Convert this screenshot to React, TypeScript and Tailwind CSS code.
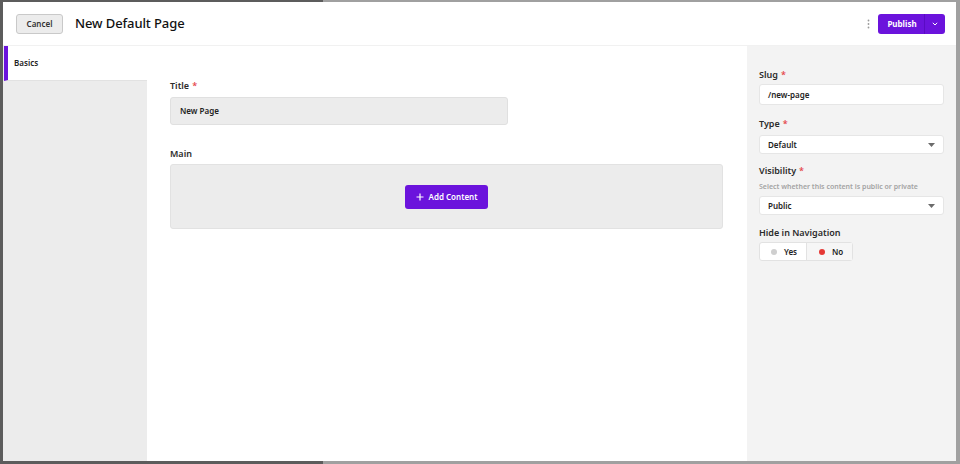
import React from "react";

const font = { fontFamily: '"Noto Sans", "Open Sans", sans-serif' };

function Label({ text, required }: { text: string; required?: boolean }) {
  return (
    <div className="text-[9px] font-semibold text-[#2b2b2b] leading-none">
      {text}
      {required ? <span className="text-[#e5484d] ml-[3px]">*</span> : null}
    </div>
  );
}

function Caret() {
  return (
    <svg width="7" height="4" viewBox="0 0 7 4">
      <path d="M0 0h7L3.5 4z" fill="#6b6b6b" />
    </svg>
  );
}

function Select({ value }: { value: string }) {
  return (
    <div className="h-[19px] bg-white border border-[#e6e6e6] rounded-[3px] flex items-center justify-between pl-[8px] pr-[8px]">
      <span className="text-[8px] font-semibold text-[#222]">{value}</span>
      <Caret />
    </div>
  );
}

export default function App() {
  return (
    <div
      className="h-[464px] w-[960px] pt-[2px] pl-[3px] pb-[3px] pr-[4px] bg-[linear-gradient(to_right,#5c5c5c_323px,#a0a0a0_323px)] overflow-hidden"
      style={font}
    >
      <div className="h-full w-full bg-white flex flex-col">
        {/* header */}
        <div className="h-[44px] shrink-0 flex items-center border-b border-[#f1f1f1] pl-[13px] pr-[11px]">
          <button className="h-[20px] w-[47px] rounded-[3px] border border-[#c9c9c9] bg-[#ececec] text-[8px] font-semibold text-[#333]">
            Cancel
          </button>
          <div className="ml-[12px] text-[13px] text-[#111] font-medium tracking-[-0.1px]">New Default Page</div>
          <div className="ml-auto flex items-center">
            <svg width="3" height="10" viewBox="0 0 3 10" className="mr-[8px]">
              <circle cx="1.5" cy="1.5" r="0.9" fill="#9a9a9a" />
              <circle cx="1.5" cy="5" r="0.9" fill="#9a9a9a" />
              <circle cx="1.5" cy="8.5" r="0.9" fill="#9a9a9a" />
            </svg>
            <div className="h-[20px] w-[67px] rounded-[3px] bg-[#6b13dc] flex items-center">
              <span className="flex-1 text-center text-[8px] font-bold text-white pl-[2px]">Publish</span>
              <div className="h-full w-px bg-[#5a0bc4]" />
              <div className="w-[20px] flex items-center justify-center">
                <svg width="6" height="4" viewBox="0 0 6 4">
                  <path d="M0.8 0.8 3 3 5.2 0.8" stroke="#fff" strokeWidth="1" fill="none" />
                </svg>
              </div>
            </div>
          </div>
        </div>

        <div className="flex-1 flex min-h-0">
          {/* sidebar */}
          <div className="w-[144px] shrink-0 bg-[#ececec] flex flex-col">
            <div className="h-[35px] bg-white border-l-[4px] border-[#6b13dc] border-b border-b-[#e2e2e2] flex items-center pl-[6px] ml-px">
              <span className="text-[8px] font-semibold text-[#222]">Basics</span>
            </div>
          </div>

          {/* main */}
          <div className="flex-1 bg-white pl-[23px] pr-[24px] pt-[35px]">
            <Label text="Title" required />
            <div className="mt-[7px] h-[28px] w-[338px] bg-[#ececec] border border-[#e0e0e0] rounded-[3px] flex items-center pl-[9px]">
              <span className="text-[8px] font-semibold text-[#222]">New Page</span>
            </div>
            <div className="mt-[24px]">
              <Label text="Main" />
            </div>
            <div className="mt-[6px] h-[65px] bg-[#ececec] border border-[#e2e2e2] rounded-[3px] flex items-center justify-center">
              <button className="h-[24px] w-[83px] rounded-[3px] bg-[#6b13dc] flex items-center justify-center gap-[5px] text-white">
                <svg width="8" height="8" viewBox="0 0 8 8">
                  <path d="M4 0.5v7M0.5 4h7" stroke="#fff" strokeWidth="1.2" />
                </svg>
                <span className="text-[8px] font-semibold">Add Content</span>
              </button>
            </div>
          </div>

          {/* right panel */}
          <div className="w-[209px] shrink-0 bg-[#f3f3f3] pl-[12px] pr-[12px] pt-[24px]">
            <Label text="Slug" required />
            <div className="mt-[5px] h-[21px] bg-white border border-[#e6e6e6] rounded-[3px] flex items-center pl-[8px]">
              <span className="text-[8px] font-semibold text-[#222]">/new-page</span>
            </div>
            <div className="mt-[14px]">
              <Label text="Type" required />
            </div>
            <div className="mt-[7px]">
              <Select value="Default" />
            </div>
            <div className="mt-[12px]">
              <Label text="Visibility" required />
            </div>
            <div className="mt-[8px] text-[7px] font-semibold text-[#a3a3a3] leading-none">
              Select whether this content is public or private
            </div>
            <div className="mt-[6px]">
              <Select value="Public" />
            </div>
            <div className="mt-[13px]">
              <Label text="Hide in Navigation" />
            </div>
            <div className="mt-[5px] h-[19px] w-[94px] bg-white border border-[#e2e2e2] rounded-[3px] flex">
              <div className="w-[47px] flex items-center pl-[11px] gap-[7px] border-r border-[#e2e2e2]">
                <span className="h-[6px] w-[6px] rounded-full bg-[#cfcfcf]" />
                <span className="text-[8px] font-semibold text-[#222]">Yes</span>
              </div>
              <div className="flex-1 flex items-center pl-[12px] gap-[7px] bg-[#f6f6f6]">
                <span className="h-[6px] w-[6px] rounded-full bg-[#e53935]" />
                <span className="text-[8px] font-semibold text-[#222]">No</span>
              </div>
            </div>
          </div>
        </div>
      </div>
    </div>
  );
}
